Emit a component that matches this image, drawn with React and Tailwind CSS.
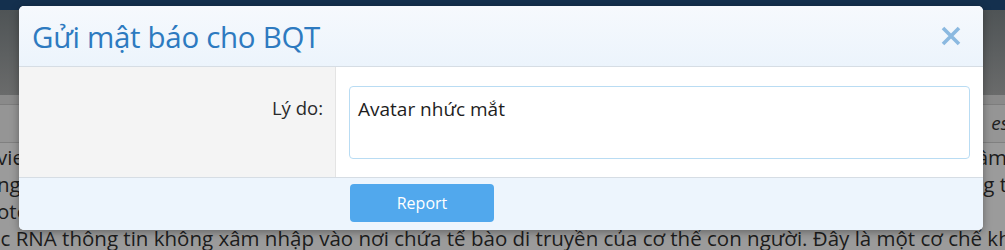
import React from 'react';

const font = { fontFamily: '"Open Sans", "Noto Sans", sans-serif' };

const ReportDialog = () => {
  return (
    <div className="absolute left-[19px] top-[6px] w-[964px] h-[224px] rounded-[5px] overflow-hidden bg-white shadow-[0_2px_8px_rgba(0,0,0,0.35)] flex flex-col">
      <div className="h-[61px] shrink-0 flex items-center justify-between pl-[13px] pr-[22px] bg-gradient-to-b from-[#f6f9fd] to-[#ecf4fc] border-b border-[#d6dde4]">
        <h2 className="text-[29.5px] text-[#2d7ac0] leading-none tracking-[-0.3px] mt-[2px]">Gửi mật báo cho BQT</h2>
        <button className="text-[#8bb9e0]">
          <svg width="20" height="20" viewBox="0 0 20 20">
            <path d="M2 2 L18 18 M18 2 L2 18" stroke="currentColor" strokeWidth="3.6" strokeLinecap="butt" />
          </svg>
        </button>
      </div>
      <div className="h-[111px] shrink-0 flex border-b border-[#d6dde4]">
        <div className="w-[317px] shrink-0 bg-[#f4f4f4] border-r border-[#e4e4e4] flex justify-end pr-[12px] pt-[32px]">
          <span className="text-[18.5px] text-[#2a2a2a] leading-none">Lý do:</span>
        </div>
        <div className="flex-1 pl-[13px] pr-[13px] pt-[19px]">
          <div className="h-[73px] border border-[#b9dcf3] rounded-[4px] px-[8px] pt-[11px]">
            <span className="text-[19px] text-[#1e1e1e] leading-none">Avatar nhức mắt</span>
          </div>
        </div>
      </div>
      <div className="flex-1 bg-[#edf5fd] pl-[331px] pt-[6px]">
        <button className="w-[144px] h-[38px] rounded-[4px] bg-[#51a8ed] text-white text-[16px]">Report</button>
      </div>
    </div>
  );
};

export default function App() {
  return (
    <div className="relative w-[1005px] h-[250px] overflow-hidden bg-[#9b9b9b]" style={font}>
      <div className="h-[10px] bg-[#14304e]" />
      <div className="h-[85px] bg-gradient-to-b from-[#4f5456] to-[#6a6b6b]" />
      <div className="h-[10px] bg-[#8a8a8a] border-b border-[#7d7d7d]" />
      <div className="h-[38px] bg-[#959595] border-b border-[#808080] flex justify-end items-center">
        <span className="italic text-[19px] text-[#202020] mr-[-4px]">es</span>
      </div>
      <div className="text-[20.5px] leading-[27px] text-[#1c1c1c] pt-[1px]">
        <div className="flex justify-between ml-[-3px] mr-[-2px]"><span>vie</span><span>âm</span></div>
        <div className="flex justify-between ml-[-3px] mr-[-2px]"><span>ng</span><span>g t</span></div>
        <div className="ml-[-3px]">ote</div>
        <div className="ml-[-12px] whitespace-nowrap">ục RNA thông tin không xâm nhập vào nơi chứa tế bào di truyền của cơ thể con người. Đây là một cơ chế khoa học</div>
      </div>
      <ReportDialog />
    </div>
  );
}
